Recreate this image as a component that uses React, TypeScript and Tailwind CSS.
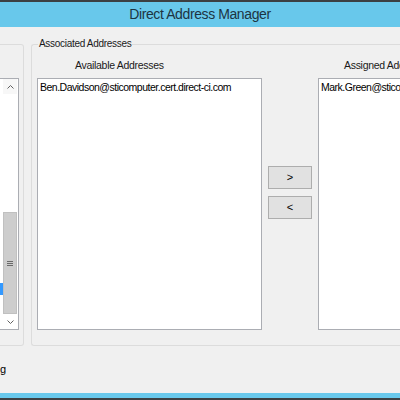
import React from 'react';

const font = { fontFamily: '"Segoe UI", "Liberation Sans", Arial, sans-serif' };

function ListBox({ items, className }: { items: string[]; className?: string }) {
  return (
    <div className={`bg-white border border-[#abadb3] pt-[2px] pl-[2px] ${className ?? ''}`}>
      {items.map((it) => (
        <div key={it} className="text-[10.5px] leading-[13px] tracking-[-0.5px] text-black whitespace-nowrap">{it}</div>
      ))}
    </div>
  );
}

export default function App() {
  return (
    <div className="w-[400px] h-[400px] overflow-hidden flex flex-col bg-[#f0f0f0]" style={font}>
      {/* Title bar */}
      <div className="h-[27px] shrink-0 border-t-[2px] border-[#3c4043] bg-[#68c8eb] flex items-center justify-center">
        <span className="text-[14px] tracking-[-0.4px] text-[#1d3442]">Direct Address Manager</span>
      </div>

      <div className="flex-1 flex flex-col">
        {/* Group boxes */}
        <div className="mt-[17px] h-[302px] flex gap-[7px]">
          {/* left group (cut off) */}
          <div className="w-[24px] shrink-0 border-t border-r border-b border-[#dcdcdc] rounded-tr-[3px] rounded-br-[3px] flex flex-col">
            <div className="mt-[33px] h-[252px] w-[19px] bg-white border-r border-b border-t border-[#abadb3] flex">
              <div className="w-[3px] flex flex-col">
                <div className="mt-[204px] h-[12px] bg-[#3399ff]" />
              </div>
              <div className="w-[14px] flex flex-col bg-[#f7f7f7]">
                <div className="h-[15px] flex items-center justify-center">
                  <svg width="7" height="4" viewBox="0 0 7 4"><path d="M0.5 3.5 L3.5 0.5 L6.5 3.5" fill="none" stroke="#606060" strokeWidth="1" /></svg>
                </div>
                <div className="h-[118px] bg-white" />
                <div className="flex-1 bg-[#cdcdcd] border border-[#c0c0c0] flex items-center justify-center">
                  <svg width="6" height="5" viewBox="0 0 6 5"><path d="M0 0.5h6M0 2.5h6M0 4.5h6" stroke="#6a6a6a" strokeWidth="1" /></svg>
                </div>
                <div className="h-[15px] bg-white flex items-center justify-center">
                  <svg width="7" height="4" viewBox="0 0 7 4"><path d="M0.5 0.5 L3.5 3.5 L6.5 0.5" fill="none" stroke="#606060" strokeWidth="1" /></svg>
                </div>
              </div>
            </div>
          </div>

          {/* Associated Addresses */}
          <div className="flex-1 relative border-t border-l border-b border-[#dcdcdc] rounded-tl-[3px] rounded-bl-[3px] pl-[5px] flex">
            <span className="absolute left-[6px] top-[-8px] bg-[#f0f0f0] px-[1px] text-[10px] tracking-[-0.3px] leading-[14px] text-[#1a1a1a]">Associated Addresses</span>
            <div className="w-[225px] shrink-0 flex flex-col">
              <div className="h-[33px] pl-[38px] pt-[13px] text-[10.5px] tracking-[-0.3px] leading-[14px] text-[#1a1a1a] whitespace-nowrap">Available Addresses</div>
              <ListBox className="h-[252px]" items={['Ben.Davidson@sticomputer.cert.direct-ci.com']} />
            </div>
            <div className="w-[56px] shrink-0 flex flex-col items-center pt-[121px] gap-[7px]">
              <button className="w-[44px] h-[23px] bg-[#e1e1e1] border border-[#adadad] text-[11px] text-black flex items-center justify-center">&gt;</button>
              <button className="w-[44px] h-[23px] bg-[#e1e1e1] border border-[#adadad] text-[11px] text-black flex items-center justify-center">&lt;</button>
            </div>
            <div className="w-[120px] shrink-0 flex flex-col">
              <div className="h-[33px] pl-[26px] pt-[13px] text-[10.5px] tracking-[-0.3px] leading-[14px] text-[#1a1a1a] whitespace-nowrap">Assigned Addresses</div>
              <ListBox className="h-[252px]" items={['Mark.Green@sticomputer.cert.direct-ci.com']} />
            </div>
          </div>
        </div>

        {/* Status */}
        <div className="flex-1 flex items-center">
          <div className="w-[6px] overflow-hidden flex justify-end">
            <span className="text-[11px] text-black whitespace-nowrap">Loading</span>
          </div>
        </div>
      </div>

      {/* Bottom frame */}
      <div className="h-[7px] shrink-0 bg-[#68c8eb] border-b-[2px] border-[#3c4043]" />
    </div>
  );
}
